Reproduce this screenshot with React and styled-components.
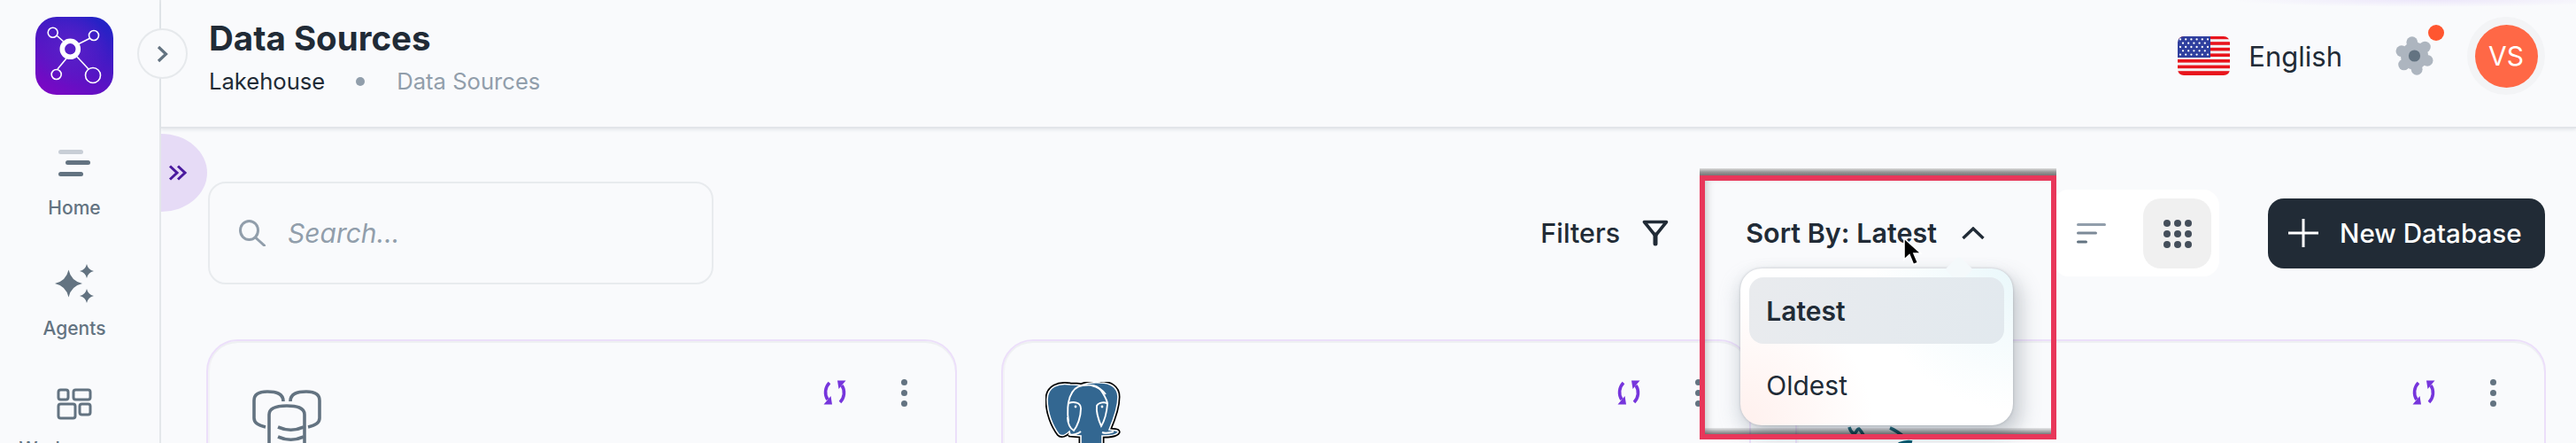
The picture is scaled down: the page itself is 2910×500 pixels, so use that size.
import React from "react";
import styled, { createGlobalStyle } from "styled-components";

const Global = createGlobalStyle`
  html, body { margin: 0; padding: 0; background: #f9fafc; }
  * { box-sizing: border-box; }
  body { font-family: Inter, "Liberation Sans", sans-serif; color: #212b36; }
`;

const Page = styled.div`
  position: relative;
  display: flex;
  width: 2910px;
  height: 500px;
  overflow: hidden;
  background: #f9fafc;
`;

const Sidebar = styled.aside`
  flex: 0 0 182px;
  border-right: 2px solid #e4e7ea;
  padding: 19px 12px 0 0;
  display: flex;
  flex-direction: column;
  align-items: center;
`;
const LogoBox = styled.div`
  width: 88px;
  height: 88px;
  flex: none;
  border-radius: 24px;
  overflow: hidden;
  background: radial-gradient(circle at 45% 40%, #5a20c8 0%, transparent 60%),
    linear-gradient(30deg, #7a08c4 8%, #4a18c4 55%, #1f24c6 95%);
`;
const Nav = styled.nav`
  margin-top: 52px;
  display: flex;
  flex-direction: column;
  gap: 47px;
`;
const NavItem = styled.div`
  display: flex;
  flex-direction: column;
  align-items: center;
  gap: 13px;
  width: 168px;
`;
const NavIcon = styled.div`
  height: 50px;
  display: flex;
  align-items: center;
  justify-content: center;
`;
const NavLabel = styled.span`
  font-size: 21px;
  font-weight: 500;
  line-height: 26px;
  color: #637381;
`;

const Main = styled.main`
  flex: 1;
  min-width: 0;
  display: flex;
  flex-direction: column;
`;
const Header = styled.header`
  flex: 0 0 145px;
  display: flex;
  align-items: flex-start;
  justify-content: space-between;
  padding: 19px 35px 0 54px;
  border-bottom: 2px solid #e2e5e9;
  box-shadow: 0 2px 3px rgba(145, 158, 171, 0.16);
  background: radial-gradient(ellipse 220px 8px at 2560px 0, #ece6fa, transparent);
`;
const Title = styled.h1`
  margin: 3px 0 0;
  font-size: 38.5px;
  line-height: 42px;
  font-weight: 700;
  letter-spacing: 0;
  color: #212b36;
`;
const Crumbs = styled.div`
  margin-top: 13px;
  display: flex;
  align-items: center;
  font-size: 25.6px;
  line-height: 30px;
`;
const CrumbDot = styled.i`
  width: 10px;
  height: 10px;
  border-radius: 50%;
  background: #919eab;
  margin: 0 36px 0 35px;
`;
const CrumbMuted = styled.span`
  color: #919eab;
`;
const HeaderRight = styled.div`
  display: flex;
  align-items: center;
  height: 88px;
`;
const Language = styled.span`
  margin-left: 21px;
  font-size: 31px;
  color: #212b36;
`;
const GearWrap = styled.div`
  position: relative;
  margin-left: 59px;
  margin-right: 37px;
  width: 45px;
  height: 44px;
`;
const Badge = styled.i`
  position: absolute;
  top: -13px;
  left: 38px;
  width: 18px;
  height: 18px;
  border-radius: 50%;
  background: #ff5630;
`;
const AvatarRing = styled.div`
  width: 88px;
  height: 88px;
  border-radius: 50%;
  background: #f3f4f6;
  display: flex;
  align-items: center;
  justify-content: center;
`;
const Avatar = styled.div`
  width: 71px;
  height: 71px;
  border-radius: 50%;
  background: #ff6846;
  color: #fff;
  font-size: 30px;
  display: flex;
  align-items: center;
  justify-content: center;
`;

const SideToggle = styled.div`
  position: absolute;
  left: 155px;
  top: 32px;
  width: 57px;
  height: 57px;
  border-radius: 50%;
  border: 2px solid #e6e9ec;
  background: #f9fafc;
  display: flex;
  align-items: center;
  justify-content: center;
`;
const ExpandTab = styled.div`
  position: absolute;
  left: 182px;
  top: 151px;
  width: 52px;
  height: 88px;
  border-radius: 0 52px 52px 0 / 0 44px 44px 0;
  background: #e6dbf6;
  display: flex;
  align-items: center;
  padding-left: 8px;
`;

const Content = styled.div`
  padding: 60px 35px 0 53px;
`;
const Toolbar = styled.div`
  display: flex;
  align-items: center;
  justify-content: space-between;
  height: 116px;
`;
const SearchBox = styled.div`
  width: 571px;
  height: 116px;
  border: 2px solid #e8ebee;
  border-radius: 20px;
  display: flex;
  align-items: center;
  padding-left: 33px;
  gap: 25px;
`;
const SearchText = styled.span`
  font-size: 30px;
  font-style: italic;
  color: #919eab;
`;
const Controls = styled.div`
  display: flex;
  align-items: center;
`;
const TextAction = styled.div`
  display: flex;
  align-items: center;
  font-size: 30.5px;
  line-height: 36px;
  font-weight: ${(p) => p.$weight || 500};
  color: #212b36;
  gap: ${(p) => p.$gap}px;
  position: relative;
`;
const FiltersAction = styled(TextAction)`
  margin-right: 87px;
`;
const SortAction = styled(TextAction)`
  margin-right: 77px;
`;
const Menu = styled.div`
  position: absolute;
  z-index: 4;
  left: -6px;
  top: 58px;
  width: 308px;
  height: 177px;
  border-radius: 24px;
  padding: 10px;
  background: radial-gradient(circle at 100% 0, #eaf8fb 0, transparent 45%),
    radial-gradient(circle at 0 100%, #fff0ed 0, transparent 42%), #ffffff;
  box-shadow: 0 0 3px rgba(100, 110, 120, 0.35), 10px 10px 22px rgba(90, 100, 110, 0.28),
    -6px 8px 20px rgba(145, 158, 171, 0.22);
  &::before {
    content: "";
    position: absolute;
    left: 236px;
    top: -10px;
    width: 22px;
    height: 22px;
    transform: rotate(45deg);
    border-radius: 5px 0 0 0;
    background: #f4f9fb;
  }
`;
const MenuItem = styled.div`
  position: relative;
  height: 75px;
  margin-bottom: 9px;
  border-radius: 16px;
  padding-left: 19px;
  display: flex;
  align-items: center;
  font-size: 30px;
  font-weight: ${(p) => (p.$active ? 600 : 400)};
  background: ${(p) => (p.$active ? "linear-gradient(100deg,#e9ebee,#e2e9ee)" : "transparent")};
`;
const ViewGroup = styled.div`
  display: flex;
  gap: 20px;
  padding: 10px 9px 9px 5px;
  margin-right: 55px;
  background: #fff;
  border-radius: 18px;
`;
const ViewButton = styled.div`
  width: 77px;
  height: 79px;
  border-radius: 20px;
  background: ${(p) => (p.$active ? "#f0f0f0" : "transparent")};
  display: flex;
  align-items: center;
  justify-content: center;
`;
const PrimaryButton = styled.div`
  width: 313px;
  height: 79px;
  border-radius: 18px;
  background: #212b36;
  color: #fff;
  font-size: 29.6px;
  font-weight: 500;
  display: flex;
  align-items: center;
  padding-left: 23px;
  gap: 24px;
`;

const CardGrid = styled.div`
  margin: 62px 0 0 -2px;
  display: grid;
  grid-template-columns: repeat(3, 847.5px);
  gap: 50px;
`;
const Card = styled.section`
  height: 320px;
  border: 2px solid #ecdffa;
  border-radius: 36px;
  box-shadow: inset 0 2px 0 #eef0f2, inset 2px 0 0 #f3f3f6;
  padding: 46px 54px 0 48px;
  display: flex;
  justify-content: space-between;
  align-items: flex-start;
`;
const CardActions = styled.div`
  margin-top: -4px;
  height: 32px;
  display: flex;
  align-items: center;
  gap: 62px;
`;
const Kebab = styled.div`
  display: flex;
  flex-direction: column;
  gap: 5px;
  & > i {
    display: block;
    width: 7px;
    height: 7px;
    border-radius: 50%;
    background: #637381;
  }
`;

const Highlight = styled.div`
  position: absolute;
  z-index: 5;
  left: 1920px;
  top: 198px;
  width: 403px;
  height: 298px;
  border: 6px solid #e8375a;
  box-shadow: inset 7px 0 8px -5px rgba(60, 60, 60, 0.28);
  pointer-events: none;
  &::before {
    content: "";
    position: absolute;
    left: -6px;
    right: -6px;
    top: -14px;
    height: 8px;
    background: linear-gradient(to top, #777, #999 50%, #ddd);
  }
  &::after {
    content: "";
    position: absolute;
    left: 0;
    right: 0;
    bottom: 0;
    height: 7px;
    background: linear-gradient(to bottom, rgba(0, 0, 0, 0.08), rgba(0, 0, 0, 0.5));
  }
`;
const Pointer = styled.svg`
  position: absolute;
  z-index: 6;
  left: 2149px;
  top: 267px;
`;

const Logo = () => (
  <svg width="88" height="88" viewBox="0 0 88 88" fill="none" stroke="#fff">
    <g strokeWidth="1.6">
      <line x1="24" y1="21" x2="33" y2="29" />
      <line x1="62" y1="24" x2="48" y2="31" />
      <line x1="25" y1="59" x2="35" y2="47" />
      <line x1="60" y1="59" x2="47" y2="45" />
      <circle cx="19.7" cy="17.7" r="5.5" />
      <circle cx="66" cy="21" r="5.5" />
      <circle cx="23.7" cy="65" r="5.5" />
      <circle cx="65" cy="66" r="8.5" />
    </g>
    <circle cx="39.3" cy="36.3" r="9" strokeWidth="5.6" />
  </svg>
);

const Bars = () => (
  <svg width="36" height="30" viewBox="0 0 36 30">
    <rect x="0" y="0" width="28" height="5" rx="2.5" fill="#c8ced6" />
    <rect x="8" y="12" width="28" height="5" rx="2.5" fill="#637381" />
    <rect x="0" y="25" width="28" height="5" rx="2.5" fill="#637381" />
  </svg>
);
const star = (cx, cy, r) =>
  `M${cx} ${cy - r}Q${cx + r * 0.18} ${cy - r * 0.18} ${cx + r} ${cy}Q${cx + r * 0.18} ${cy + r * 0.18} ${cx} ${cy + r}Q${cx - r * 0.18} ${cy + r * 0.18} ${cx - r} ${cy}Q${cx - r * 0.18} ${cy - r * 0.18} ${cx} ${cy - r}Z`;
const Sparkles = () => (
  <svg width="44" height="44" viewBox="0 0 44 44" fill="#637381">
    <path d={star(15.5, 22, 15.5)} />
    <path d={star(36, 8, 8)} />
    <path d={star(36, 36, 8)} />
  </svg>
);
const Tiles = () => (
  <svg width="40" height="36" viewBox="0 0 40 36" fill="none" stroke="#637381" strokeWidth="3">
    <rect x="2" y="2" width="11" height="11" rx="2.5" />
    <rect x="19" y="2" width="19" height="11" rx="2.5" />
    <rect x="2" y="18" width="19" height="16" rx="2.5" />
    <rect x="26" y="18" width="12" height="12" rx="2.5" />
  </svg>
);
const Chevron = () => (
  <svg width="14" height="20" viewBox="0 0 14 20" fill="none" stroke="#637381" strokeWidth="3.2">
    <path d="M2 2l8.5 8-8.5 8" />
  </svg>
);
const DoubleChevron = () => (
  <svg width="22" height="18" viewBox="0 0 22 18" fill="none" stroke="#4a1a9e" strokeWidth="3">
    <path d="M2 1.5l8 7.5-8 7.5M11 1.5l8 7.5-8 7.5" />
  </svg>
);

const stars = [];
for (let r = 0; r < 5; r++) {
  const n = r % 2 ? 5 : 6;
  for (let c = 0; c < n; c++) {
    stars.push(<circle key={`${r}-${c}`} cx={(r % 2 ? 6 : 3) + c * 6.2} cy={3.4 + r * 4.3} r="1.15" fill="#fff" />);
  }
}
const Flag = () => (
  <svg width="59" height="44" viewBox="0 0 59 44">
    <defs>
      <clipPath id="flagclip">
        <rect width="59" height="44" rx="7" />
      </clipPath>
    </defs>
    <g clipPath="url(#flagclip)">
      <rect width="59" height="44" fill="#f4f1f2" />
      {[0, 1, 2, 3, 4, 5, 6].map((i) => (
        <rect key={i} y={i * 6.6 - 0.4} width="59" height="3.6" fill="#e8141c" />
      ))}
      <rect y="41" width="59" height="3" fill="#e8141c" />
      <rect width="37" height="24" fill="#2f3f9e" />
      {stars}
    </g>
  </svg>
);
const Gear = () => {
  const lobes = [0, 60, 120, 180, 240, 300].map((a) => {
    const t = ((a - 10) * Math.PI) / 180;
    return <circle key={a} cx={22.5 + 15.5 * Math.sin(t)} cy={22 - 15.5 * Math.cos(t)} r="6.4" />;
  });
  return (
    <svg width="45" height="44" viewBox="0 0 45 44">
      <g fill="#adb5bf">
        <circle cx="22.5" cy="22" r="15.5" />
        {lobes}
      </g>
      <circle cx="22.5" cy="22" r="6.6" fill="#637381" />
    </svg>
  );
};
const SearchIcon = () => (
  <svg width="30" height="30" viewBox="0 0 30 30" fill="none" stroke="#919eab" strokeWidth="3">
    <ellipse cx="11.5" cy="12" rx="10" ry="10.5" />
    <path d="M18.5 20l10 9" strokeLinecap="round" />
  </svg>
);
const FilterIcon = () => (
  <svg width="30" height="30" viewBox="0 0 30 30" fill="none" stroke="#212b36">
    <path d="M2.5 2.5h25L15 18z" strokeWidth="3.6" strokeLinejoin="round" />
    <path d="M15 17v10" strokeWidth="5" strokeLinecap="round" />
  </svg>
);
const ChevronUp = () => (
  <svg width="26" height="14" viewBox="0 0 26 14" fill="none" stroke="#212b36" strokeWidth="3.4">
    <path d="M1.5 13L13 2l11.5 11" />
  </svg>
);
const SortIcon = () => (
  <svg width="33" height="23" viewBox="0 0 33 23">
    <rect y="0" width="33" height="3" rx="1.5" fill="#919eab" />
    <rect y="9.5" width="23" height="3" rx="1.5" fill="#7c8a98" />
    <rect y="19.5" width="12" height="3" rx="1.5" fill="#637381" />
  </svg>
);
const GridIcon = () => (
  <svg width="32" height="32" viewBox="0 0 32 32" fill="#454f5b">
    {[4, 16, 28].map((y) =>
      [4, 16, 28].map((x) => <circle key={`${x}${y}`} cx={x} cy={y} r="4" />)
    )}
  </svg>
);
const PlusIcon = () => (
  <svg width="34" height="32" viewBox="0 0 34 32" stroke="#fff" strokeWidth="3">
    <path d="M17 0v32M0 16h34" />
  </svg>
);
const SyncIcon = () => (
  <svg width="26" height="28" viewBox="0 0 26 28" fill="none" stroke="#7635dc" strokeWidth="3.6">
    <path d="M7 3C2 8 1 16 5 22M19 25c5-5 6-13 2-19" />
    <path d="M0.5 27.500h9.500l-1.500-9.500zM25.500 0.500h-9.500l1.500 9.500z" fill="#7635dc" stroke="none" />
  </svg>
);
const DbIcon = () => (
  <svg width="130" height="70" viewBox="-2 -9 130 70" fill="none" stroke="#637381" strokeWidth="3.6">
    <path d="M35 13C35 4 27 2 17 2 7 2 2 5 2 12v20c0 5 4 8 13 10" />
    <path d="M43 13C43 4 51 2 61 2c10 0 15 3 15 10v20c0 5-4 8-13 10" />
    <path d="M19 70V28c0-8 9-10 20-10s20 2 20 10v42" />
    <path d="M29 42c9 4 20 4 29 0M29 53c9 4 20 4 29 0" />
  </svg>
);
const PgIcon = () => (
  <svg width="130" height="70" viewBox="10 5 130 70">
    <defs>
      <path
        id="pgshape"
        d="M38 8C25 6 12 10 12 25c0 15 6 30 13 39 3 3 8 1 12-3l1 4 12 1v12h24V66c6 0 16 0 18-4 1-3-7-2-10-3 6-14 10-29 10-37 0-12-10-16-20-16-10-1-17 1-22 3-4-1-8-1-12-1z"
      />
    </defs>
    <use href="#pgshape" fill="#336791" stroke="#000" strokeWidth="5" />
    <use href="#pgshape" fill="#336791" stroke="#fff" strokeWidth="1.6" />
    <g fill="none" stroke="#fff" strokeWidth="1.9">
      <path d="M36 50C33 28 38 11 52 9c10-1 18-1 23 9 3 5 5 9 5 12" />
      <path d="M62 9c8 2 13 6 16 10" />
      <path d="M36 29c6-2 14-1 14 6 0 10-4 20-8 25-4-2-7-8-7-15" />
      <path d="M68 32c2-4 10-5 12-2-1 12-4 20-7 25-3-7-6-15-5-23z" />
      <path d="M36 64c5 2 12-1 14-3M74 62c5 2 10 0 13-1" />
    </g>
    <circle cx="44" cy="33" r="1.4" fill="#fff" />
    <circle cx="74" cy="33" r="1.4" fill="#fff" />
  </svg>
);
const TealIcon = () => (
  <svg width="130" height="70" viewBox="0 0 130 70" fill="none" stroke="#00546b" strokeWidth="3.6">
    <path d="M11 51c2 7 6 9 8 5 1-2 2-3 3-3 2 2 4 5 5 7" />
    <path d="M57 52c5 2 11 6 17 11" />
    <path d="M67 70c5-2 11-3 15-2" />
  </svg>
);
const Actions = () => (
  <CardActions>
    <SyncIcon />
    <Kebab>
      <i />
      <i />
      <i />
    </Kebab>
  </CardActions>
);

export default function App() {
  return (
    <Page>
      <Global />
      <Sidebar>
        <LogoBox>
          <Logo />
        </LogoBox>
        <Nav>
          <NavItem>
            <NavIcon>
              <Bars />
            </NavIcon>
            <NavLabel>Home</NavLabel>
          </NavItem>
          <NavItem>
            <NavIcon>
              <Sparkles />
            </NavIcon>
            <NavLabel>Agents</NavLabel>
          </NavItem>
          <NavItem>
            <NavIcon>
              <Tiles />
            </NavIcon>
            <NavLabel>Workspaces</NavLabel>
          </NavItem>
        </Nav>
      </Sidebar>
      <Main>
        <Header>
          <div>
            <Title>Data Sources</Title>
            <Crumbs>
              <span>Lakehouse</span>
              <CrumbDot />
              <CrumbMuted>Data Sources</CrumbMuted>
            </Crumbs>
          </div>
          <HeaderRight>
            <Flag />
            <Language>English</Language>
            <GearWrap>
              <Gear />
              <Badge />
            </GearWrap>
            <AvatarRing>
              <Avatar>VS</Avatar>
            </AvatarRing>
          </HeaderRight>
        </Header>
        <Content>
          <Toolbar>
            <SearchBox>
              <SearchIcon />
              <SearchText>Search...</SearchText>
            </SearchBox>
            <Controls>
              <FiltersAction $gap={25}>
                Filters
                <FilterIcon />
              </FiltersAction>
              <SortAction $gap={28} $weight={600}>
                Sort By: Latest
                <ChevronUp />
                <Menu>
                  <MenuItem $active>Latest</MenuItem>
                  <MenuItem>Oldest</MenuItem>
                </Menu>
              </SortAction>
              <ViewGroup>
                <ViewButton>
                  <SortIcon />
                </ViewButton>
                <ViewButton $active>
                  <GridIcon />
                </ViewButton>
              </ViewGroup>
              <PrimaryButton>
                <PlusIcon />
                New Database
              </PrimaryButton>
            </Controls>
          </Toolbar>
          <CardGrid>
            <Card>
              <DbIcon />
              <Actions />
            </Card>
            <Card>
              <PgIcon />
              <Actions />
            </Card>
            <Card>
              <TealIcon />
              <Actions />
            </Card>
          </CardGrid>
        </Content>
      </Main>
      <SideToggle>
        <Chevron />
      </SideToggle>
      <ExpandTab>
        <DoubleChevron />
      </ExpandTab>
      <Highlight />
      <Pointer width="22" height="34" viewBox="0 0 22 34">
        <path d="M2 2v24l6-5.500 4.500 11 5-2-4.500-10.500h8z" fill="#000" stroke="#fff" strokeWidth="1.6" />
      </Pointer>
    </Page>
  );
}
